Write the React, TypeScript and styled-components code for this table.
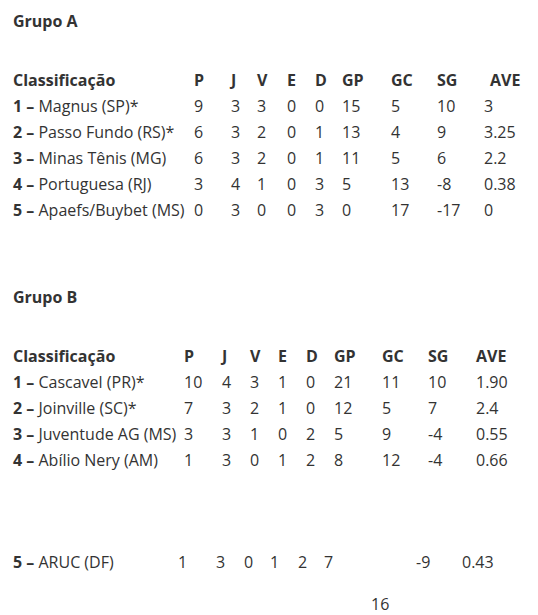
import React from "react";
import styled, { createGlobalStyle } from "styled-components";

const GlobalStyle = createGlobalStyle`
  html, body { margin: 0; padding: 0; background: #ffffff; }
  body {
    font-family: "Open Sans", "Liberation Sans", sans-serif;
    font-size: 16px;
    color: #333333;
  }
`;

const Page = styled.div`
  padding: 8px 0 0 13px;
  width: 525px;
  box-sizing: border-box;
`;

const Group = styled.section<{ $gap?: number }>`
  margin-top: ${(p) => p.$gap ?? 0}px;
`;

const GroupTitle = styled.h3`
  margin: 0;
  font-size: 16px;
  line-height: 26px;
  font-weight: 700;
`;

const Table = styled.div<{ $gap: number }>`
  margin-top: ${(p) => p.$gap}px;
  display: flex;
  flex-direction: column;
`;

const Row = styled.div<{ $cols: string }>`
  display: grid;
  grid-template-columns: ${(p) => p.$cols};
  align-items: start;
  line-height: 26px;
  white-space: nowrap;
`;

const Cell = styled.div<{ $head?: boolean; $shift?: number; $drop?: number }>`
  font-weight: ${(p) => (p.$head ? 700 : 400)};
  padding-left: ${(p) => p.$shift ?? 0}px;
  padding-top: ${(p) => p.$drop ?? 0}px;
`;

const Rank = styled.b`
  font-weight: 700;
`;

const HEAD = ["P", "J", "V", "E", "D", "GP", "GC", "SG", "AVE"];

type Team = { rank: number; name: string; stats: string[] };

const groupA: Team[] = [
  { rank: 1, name: "Magnus (SP)*", stats: ["9", "3", "3", "0", "0", "15", "5", "10", "3"] },
  { rank: 2, name: "Passo Fundo (RS)*", stats: ["6", "3", "2", "0", "1", "13", "4", "9", "3.25"] },
  { rank: 3, name: "Minas Tênis (MG)", stats: ["6", "3", "2", "0", "1", "11", "5", "6", "2.2"] },
  { rank: 4, name: "Portuguesa (RJ)", stats: ["3", "4", "1", "0", "3", "5", "13", "-8", "0.38"] },
  { rank: 5, name: "Apaefs/Buybet (MS)", stats: ["0", "3", "0", "0", "3", "0", "17", "-17", "0"] },
];

const groupB: Team[] = [
  { rank: 1, name: "Cascavel (PR)*", stats: ["10", "4", "3", "1", "0", "21", "11", "10", "1.90"] },
  { rank: 2, name: "Joinville (SC)*", stats: ["7", "3", "2", "1", "0", "12", "5", "7", "2.4"] },
  { rank: 3, name: "Juventude AG (MS)", stats: ["3", "3", "1", "0", "2", "5", "9", "-4", "0.55"] },
  { rank: 4, name: "Abílio Nery (AM)", stats: ["1", "3", "0", "1", "2", "8", "12", "-4", "0.66"] },
];

const lastB: Team = { rank: 5, name: "ARUC (DF)", stats: ["1", "3", "0", "1", "2", "7", "16", "-9", "0.43"] };

const COLS_A = "181px 37px 26px 30px 28px 27px 49px 46px 47px 1fr";
const COLS_B = "171px 38px 28px 28px 28px 28px 48px 46px 48px 1fr";
const COLS_B5 = "165px 38px 28px 26px 28px 26px 47px 45px 46px 1fr";

const TeamRow = ({ team, cols, dropCol }: { team: Team; cols: string; dropCol?: number }) => (
  <Row $cols={cols}>
    <Cell>
      <Rank>{team.rank} –</Rank> {team.name}
    </Cell>
    {team.stats.map((s, i) => (
      <Cell key={i} $drop={dropCol === i ? 42 : 0}>
        {s}
      </Cell>
    ))}
  </Row>
);

const HeaderRow = ({ cols, aveShift }: { cols: string; aveShift: number }) => (
  <Row $cols={cols}>
    <Cell $head>Classificação</Cell>
    {HEAD.map((h) => (
      <Cell key={h} $head $shift={h === "AVE" ? aveShift : 0}>
        {h}
      </Cell>
    ))}
  </Row>
);

export default function App() {
  return (
    <>
      <GlobalStyle />
      <Page>
        <Group>
          <GroupTitle>Grupo A</GroupTitle>
          <Table $gap={33}>
            <HeaderRow cols={COLS_A} aveShift={6} />
            {groupA.map((t) => (
              <TeamRow key={t.rank} team={t} cols={COLS_A} />
            ))}
          </Table>
        </Group>
        <Group $gap={61}>
          <GroupTitle>Grupo B</GroupTitle>
          <Table $gap={33}>
            <HeaderRow cols={COLS_B} aveShift={0} />
            {groupB.map((t) => (
              <TeamRow key={t.rank} team={t} cols={COLS_B} />
            ))}
          </Table>
          <Table $gap={76}>
            <TeamRow team={lastB} cols={COLS_B5} dropCol={6} />
          </Table>
        </Group>
      </Page>
    </>
  );
}
